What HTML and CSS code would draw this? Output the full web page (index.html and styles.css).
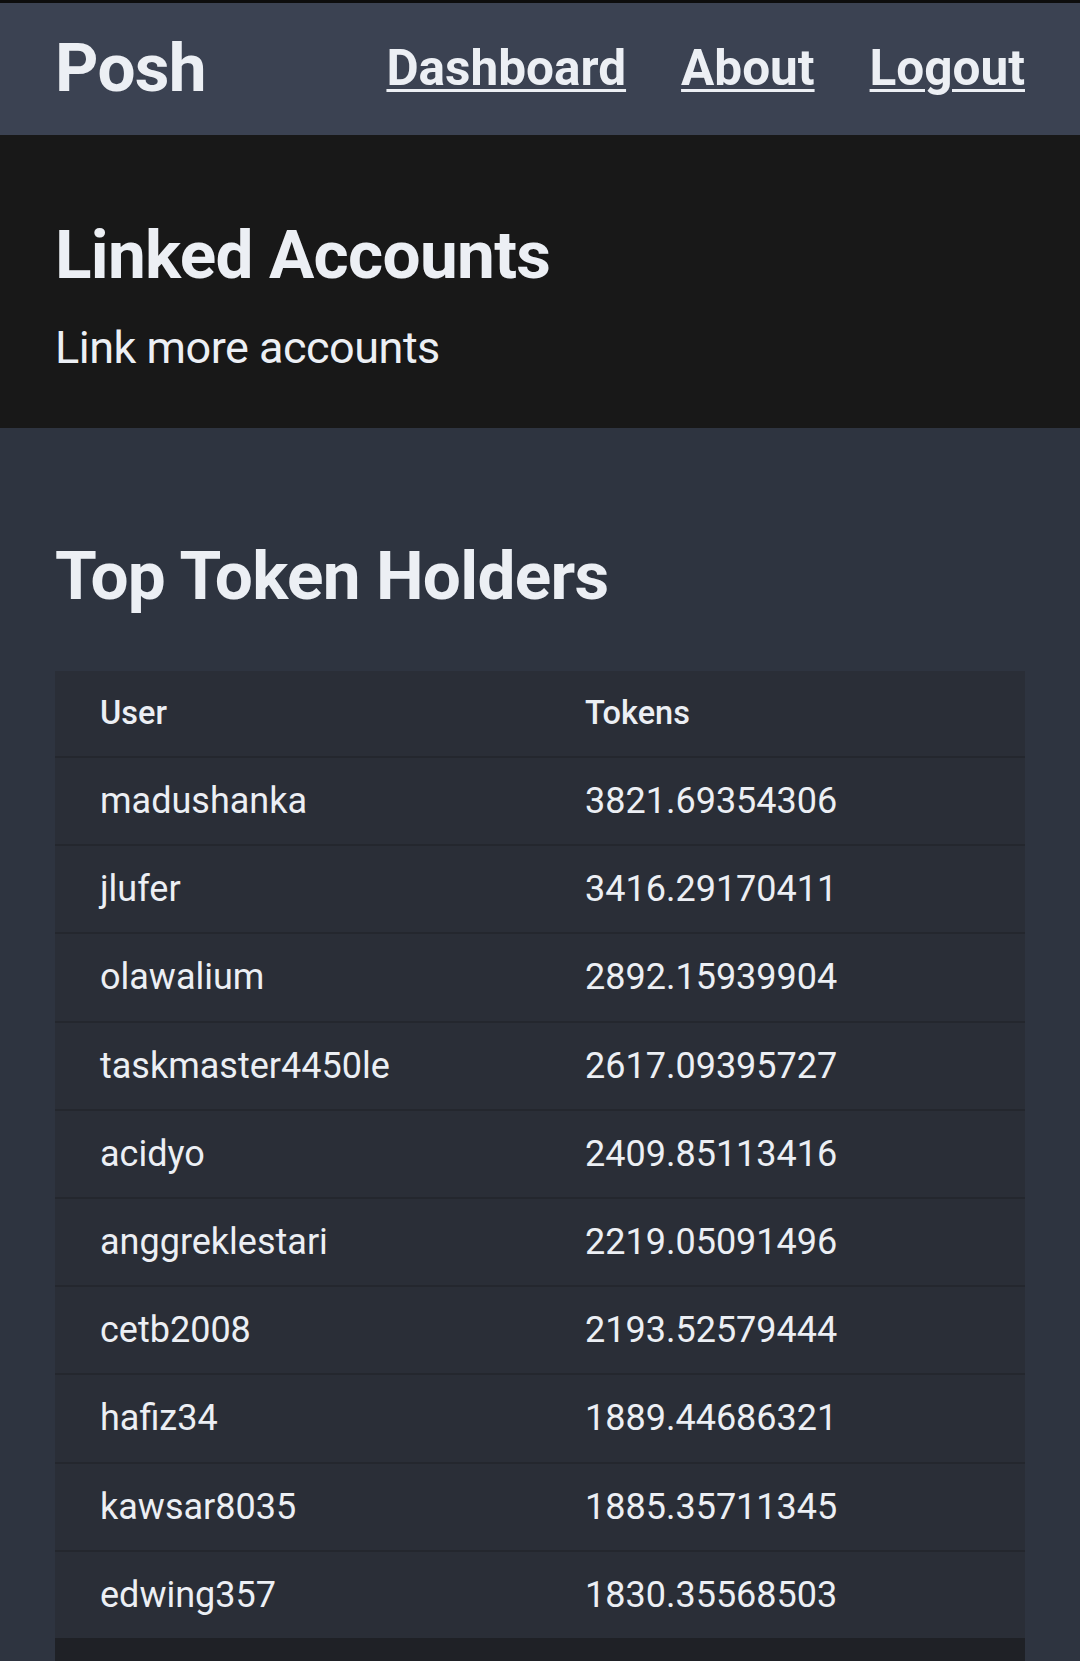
FILE: index.html
```html
<!DOCTYPE html>
<html lang="en">
<head>
    <meta charset="UTF-8">
    <title>Posh</title>
    <link rel="stylesheet" href="styles.css">
</head>
<body>
<!--top bar-->
<header class="topbar">
    <a class="brand" href="#">Posh</a>
    <nav class="nav">
        <a href="#">Dashboard</a>
        <a href="#">About</a>
        <a href="#">Logout</a>
    </nav>
</header>
<!--linked accounts-->
<section class="hero">
    <h2 class="title">Linked Accounts</h2>
    <p class="sub">Link more accounts</p>
</section>
<!--leaderboard-->
<main class="main">
    <h2 class="title">Top Token Holders</h2>
    <table class="holders">
        <thead>
        <tr><th>User</th><th>Tokens</th></tr>
        </thead>
        <tbody>
        <tr><td>madushanka</td><td>3821.69354306</td></tr>
        <tr><td>jlufer</td><td>3416.29170411</td></tr>
        <tr><td>olawalium</td><td>2892.15939904</td></tr>
        <tr><td>taskmaster4450le</td><td>2617.09395727</td></tr>
        <tr><td>acidyo</td><td>2409.85113416</td></tr>
        <tr><td>anggreklestari</td><td>2219.05091496</td></tr>
        <tr><td>cetb2008</td><td>2193.52579444</td></tr>
        <tr><td>hafiz34</td><td>1889.44686321</td></tr>
        <tr><td>kawsar8035</td><td>1885.35711345</td></tr>
        <tr><td>edwing357</td><td>1830.35568503</td></tr>
        </tbody>
    </table>
    <div class="holders-foot"></div>
</main>
</body>
</html>
```
FILE: styles.css
```css
 *{
     margin: 0;
     padding: 0;
     box-sizing: border-box;
 }
 body{
     background-color: #2e3440;
     color: #eceff4;
     font-family: Roboto, "Liberation Sans", sans-serif;
     border-top: 3px solid #0d0d0d;
 }
 a{
     color: #eceff4;
 }
 .topbar{
     height: 132px;
     padding: 0 55px;
     background-color: #3b4252;
     display: flex;
     align-items: center;
     justify-content: space-between;
 }
 .brand{
     font-size: 67.5px;
     line-height: 1;
     font-weight: 700;
     letter-spacing: -0.7px;
     text-decoration: none;
     padding-bottom: 2px;
 }
 .nav{
     display: flex;
     gap: 55px;
 }
 .nav a{
     font-size: 49.5px;
     line-height: 1;
     font-weight: 700;
     text-decoration-thickness: 3px;
     text-underline-offset: 4px;
 }
 .hero{
     background-color: #181818;
     padding: 79px 55px 46px;
 }
 .title{
     font-size: 67.5px;
     line-height: 81px;
     font-weight: 700;
     letter-spacing: -0.7px;
 }
 .sub{
     font-size: 45px;
     line-height: 69px;
     letter-spacing: -0.5px;
     margin-top: 18px;
 }
 .main{
     padding: 107px 55px 0;
 }
 .holders{
     width: 100%;
     margin-top: 55px;
     border-collapse: collapse;
     background-color: #2a2e37;
     text-align: left;
 }
 .holders th,
 .holders td{
     width: 50%;
     padding: 18px 45px;
     border-bottom: 2px solid #24272e;
 }
 .holders th{
     font-size: 32.5px;
     line-height: 49px;
     font-weight: 500;
 }
 .holders td{
     font-size: 36px;
     line-height: 50.2px;
     font-weight: 400;
 }
 .holders tbody tr:last-child td{
     border-bottom: none;
 }
 .holders-foot{
     height: 60px;
     background-color: #1f2126;
 }
```
